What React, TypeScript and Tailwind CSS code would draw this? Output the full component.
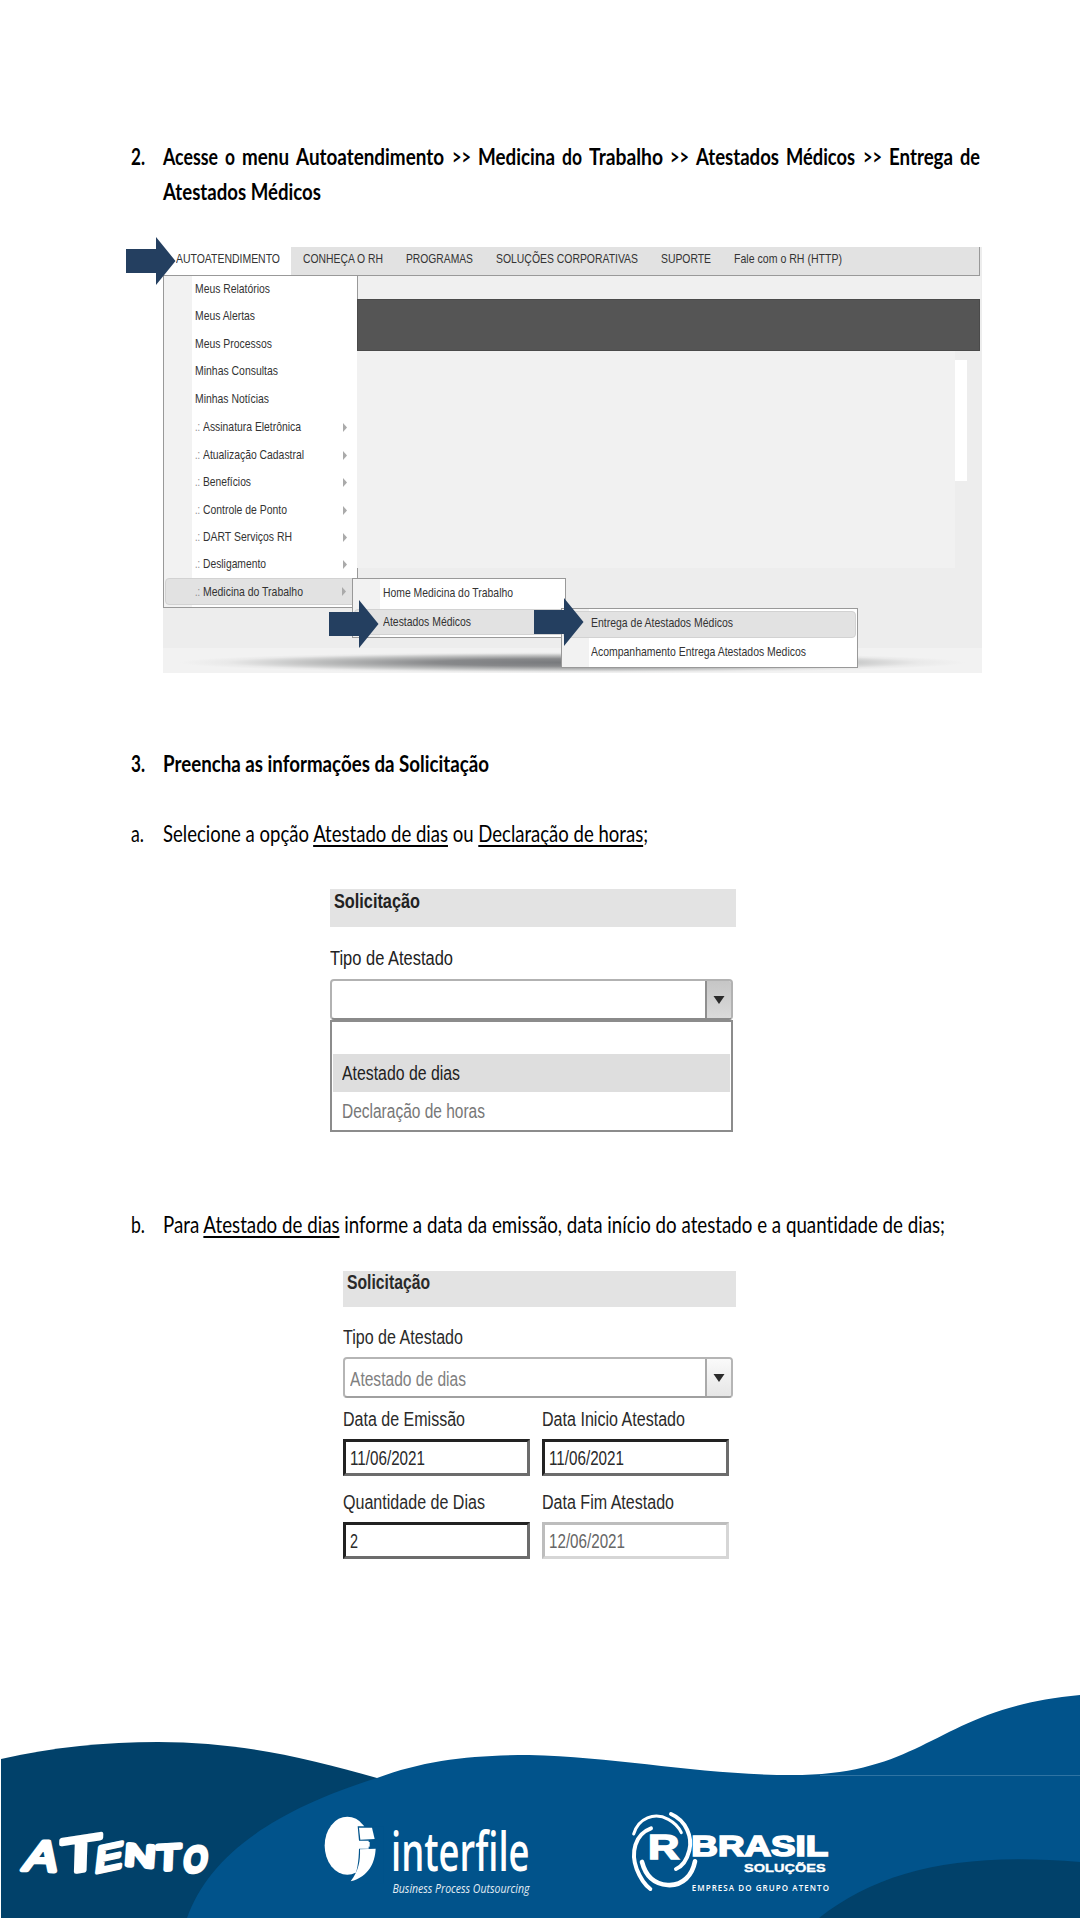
import { useLayoutEffect, useRef, type ReactNode } from "react";

/* Condenses or stretches a run of text horizontally to a given width. */
function Fit({ w, className = "", children }: { w: number; className?: string; children: ReactNode }) {
  const ref = useRef<HTMLSpanElement>(null);
  useLayoutEffect(() => {
    const el = ref.current;
    if (!el) return;
    el.style.transform = "none";
    const natural = el.getBoundingClientRect().width;
    if (natural > 0) el.style.transform = `scaleX(${w / natural})`;
  }, [w]);
  return (
    <span className={`block shrink-0 ${className}`} style={{ width: w }}>
      <span ref={ref} className="inline-block origin-left whitespace-nowrap align-top">
        {children}
      </span>
    </span>
  );
}

function Arrow({ className }: { className: string }) {
  return (
    <svg className={`absolute ${className}`} width="50" height="48" viewBox="0 0 50 48">
      <path d="M0 12H30V0L49.500 24L30 48V36H0Z" fill="#243f60" />
    </svg>
  );
}

const titleWords: [string, number][] = [
  ["Acesse", 55], ["o", 10], ["menu", 47], ["Autoatendimento", 148], [">>", 19], ["Medicina", 77],
  ["do", 20], ["Trabalho", 74], [">>", 19], ["Atestados", 83], ["Médicos", 69], [">>", 19],
  ["Entrega", 64], ["de", 20],
];

const tabs: [string, number][] = [
  ["CONHEÇA O RH", 80], ["PROGRAMAS", 67], ["SOLUÇÕES CORPORATIVAS", 142], ["SUPORTE", 50], ["Fale com o RH (HTTP)", 108],
];

const entries: [string, number][] = [
  ["Meus Relatórios", 75], ["Meus Alertas", 60], ["Meus Processos", 77], ["Minhas Consultas", 83], ["Minhas Notícias", 74],
];

const groups: [string, number][] = [
  ["Assinatura Eletrônica", 98], ["Atualização Cadastral", 101], ["Benefícios", 48], ["Controle de Ponto", 84],
  ["DART Serviços RH", 89], ["Desligamento", 63], ["Medicina do Trabalho", 100],
];

function PortalMenu() {
  return (
    <div className="relative ml-[163px] mt-[38px] h-[426px] w-[819px] shrink-0 bg-[#ededed] font-['Liberation_Sans',sans-serif] text-[13.500px] text-[#333]">
      <div className="flex h-[29px] w-[817px] border-b border-r border-[#999] bg-[#e2e2e2] leading-[24px]">
        <div className="w-[128px] bg-white pl-[13px]">
          <Fit w={104}>AUTOATENDIMENTO</Fit>
        </div>
        <div className="flex gap-[23px] pl-3">
          {tabs.map(([t, w]) => (
            <Fit key={t} w={w}>{t}</Fit>
          ))}
        </div>
      </div>
      <div className="flex h-[292px]">
        <div className="w-[194px] shrink-0" />
        <div className="flex w-[624px] flex-col">
          <div className="h-[23px] border-l border-[#999] bg-[#f0f0f0]" />
          <div className="h-[52px] w-[623px] border border-[#4a4a4a] bg-[#555]" />
          <div className="flex grow">
            <div className="w-[598px] bg-[#f1f1f1]" />
            <div className="mt-[9px] h-[121px] w-3 bg-white" />
          </div>
        </div>
      </div>
      <div className="mt-[80px] h-[25px] bg-[#f2f2f2] bg-[radial-gradient(ellipse_48%_42%_at_50%_58%,#77797c_0%,#88898b_35%,#bdbebe_65%,#e9e9e9_88%,#f2f2f2_100%)]" />

      <div className="absolute left-0 top-[29px] flex h-[332px] w-[194px] flex-col border-b border-l border-[#999] bg-[linear-gradient(to_right,#f2f2f2_28px,#fff_28px)]">
        {entries.map(([t, w]) => (
          <div key={t} className="h-[27.450px] pl-[31px] leading-[26px]">
            <Fit w={w}>{t}</Fit>
          </div>
        ))}
        {groups.map(([t, w], i) => (
          <div
            key={t}
            className={
              i === 6
                ? "ml-px flex h-[27.450px] items-start rounded-sm border border-[#d2d2d2] bg-[#e2e2e2] pl-[29px] leading-[25px]"
                : "flex h-[27.450px] items-start pl-[31px] leading-[27px]"
            }
          >
            <Fit w={5} className="text-[#888]">.:</Fit>
            <Fit w={w} className="ml-[3px]">{t}</Fit>
            <svg className={i === 6 ? "ml-auto mr-[10px] mt-[8px] h-[9px] w-[4px]" : "ml-auto mr-[10px] mt-[10px] h-[9px] w-[4px]"} viewBox="0 0 4 9">
              <path d="M0 0L4 4.500L0 9Z" fill="#aaa" />
            </svg>
          </div>
        ))}
      </div>
      <div className="absolute left-[194px] top-[321px] h-[10px] w-px bg-[#999]" />

      <div className="absolute left-[189px] top-[331px] flex h-[60px] w-[214px] flex-col border border-[#999] bg-[linear-gradient(to_right,#f2f2f2_27px,#fff_27px)]">
        <div className="h-[30px] pl-[30px] leading-[27px]">
          <Fit w={130}>Home Medicina do Trabalho</Fit>
        </div>
        <div className="mx-px h-[26px] rounded-sm border border-[#d2d2d2] bg-[#e2e2e2] pl-[28px] leading-[24px]">
          <Fit w={88}>Atestados Médicos</Fit>
        </div>
      </div>
      <div className="absolute left-[398px] top-[361px] flex h-[60px] w-[297px] flex-col border border-[#999] bg-[linear-gradient(to_right,#f2f2f2_27px,#fff_27px)] pt-[2px]">
        <div className="mx-px h-[27px] rounded-sm border border-[#d2d2d2] bg-[#e2e2e2] pl-[27px] leading-[22px]">
          <Fit w={142}>Entrega de Atestados Médicos</Fit>
        </div>
        <div className="pl-[29px] leading-[27px]">
          <Fit w={215}>Acompanhamento Entrega Atestados Medicos</Fit>
        </div>
      </div>
      <Arrow className="left-[-37px] top-[-10px]" />
      <Arrow className="left-[166px] top-[353px]" />
      <Arrow className="left-[371px] top-[351px]" />
    </div>
  );
}

function Caret() {
  return (
    <svg className="h-[8px] w-[12px]" viewBox="0 0 12 8">
      <path d="M0.500 0H11.500L6 8Z" fill="#2b2b2b" />
    </svg>
  );
}

function DropdownForm() {
  return (
    <div className="ml-[330px] mt-[38px] h-[243px] w-[406px] shrink-0 font-['Liberation_Sans',sans-serif] text-[20px] text-[#222]">
      <div className="h-[38px] bg-[#e3e3e3] pl-[4px] font-bold leading-[25px]">
        <Fit w={86}>Solicitação</Fit>
      </div>
      <div className="mt-[17px] h-[35px] leading-[28px]">
        <Fit w={123}>Tipo de Atestado</Fit>
      </div>
      <div className="flex h-[41px] w-[403px] overflow-hidden rounded-[4px] border-2 border-[#b2b2b2] border-b-[#8a8a8a] bg-white">
        <div className="grow" />
        <div className="flex w-[26px] items-center justify-center border-l-2 border-[#8f8f8f] bg-linear-to-b from-[#c6c6c6] to-[#dadada]">
          <Caret />
        </div>
      </div>
      <div className="flex h-[112px] w-[403px] flex-col border-2 border-[#8c8c8c] bg-white px-px">
        <div className="h-[32px] shrink-0" />
        <div className="h-[38px] shrink-0 bg-[#dedede] pl-[9px] leading-[38px]">
          <Fit w={118}>Atestado de dias</Fit>
        </div>
        <div className="h-[38px] shrink-0 pl-[9px] leading-[38px] text-[#777]">
          <Fit w={143}>Declaração de horas</Fit>
        </div>
      </div>
    </div>
  );
}

function Field({ label, lw, value, vw, disabled }: { label: string; lw: number; value: string; vw: number; disabled?: boolean }) {
  return (
    <div className="w-[187px]">
      <div className="h-[33px] leading-[27px]">
        <Fit w={lw}>{label}</Fit>
      </div>
      <div
        className={
          "h-[37px] border-[3px] bg-white pl-[4px] leading-[32px] " +
          (disabled
            ? "border-b-[#d6d6d6] border-l-[#bdbdbd] border-r-[#d6d6d6] border-t-[#bdbdbd] text-[#666]"
            : "border-b-[#6c6c6c] border-l-[#222] border-r-[#6c6c6c] border-t-[#222]")
        }
      >
        <Fit w={vw}>{value}</Fit>
      </div>
    </div>
  );
}

function DatesForm() {
  return (
    <div className="ml-[343px] mt-[29px] h-[289px] w-[393px] shrink-0 font-['Liberation_Sans',sans-serif] text-[20px] text-[#2a2a2a]">
      <div className="h-[36px] bg-[#e3e3e3] pl-[4px] font-bold leading-[22px]">
        <Fit w={83}>Solicitação</Fit>
      </div>
      <div className="mt-[16px] h-[34px] leading-[28px]">
        <Fit w={120}>Tipo de Atestado</Fit>
      </div>
      <div className="flex h-[41px] w-[390px] overflow-hidden rounded-[4px] border-2 border-[#b5b5b5] border-b-[#a0a0a0] bg-white">
        <div className="grow pl-[5px] leading-[40px] text-[#808080]">
          <Fit w={116}>Atestado de dias</Fit>
        </div>
        <div className="flex w-[26px] items-center justify-center border-l-2 border-[#aaa] bg-linear-to-b from-[#fafafa] to-[#e6e6e6]">
          <Caret />
        </div>
      </div>
      <div className="mt-[8px] grid grid-cols-[187px_187px] gap-x-[12px] gap-y-[13px]">
        <Field label="Data de Emissão" lw={122} value="11/06/2021" vw={75} />
        <Field label="Data Inicio Atestado" lw={143} value="11/06/2021" vw={75} />
        <Field label="Quantidade de Dias" lw={142} value="2" vw={8} />
        <Field label="Data Fim Atestado" lw={132} value="12/06/2021" vw={76} disabled />
      </div>
    </div>
  );
}

function Letter({ c, t, size }: { c: string; t: string; size: number }) {
  return (
    <text transform={t} fontSize={size}>{c}</text>
  );
}

function Footer() {
  return (
    <svg className="mt-auto block shrink-0" width="1080" height="240" viewBox="0 0 1080 240">
      <path d="M1 79C55 67 105 62 158 62C235 62 300 76 377 98V238H1Z" fill="#01416a" />
      <path d="M187 238C208 180 265 133 377 98C425 80 473 75 529 75C620 77 700 95 792 95C930 95 935 28 1080 15V238Z" fill="#01538b" />
      <path d="M819 238C880 190 960 172 1080 182V238Z" fill="#01416a" />
      <path d="M820 95.500H1080" stroke="#2f73a2" strokeWidth="1" />

      {/* Atento */}
      <g fill="#fff" stroke="#fff" strokeWidth="5" strokeLinejoin="round" fontFamily="'Liberation Sans', sans-serif">
        <Letter c="A" t="matrix(1 .04 -.22 .86 22 190)" size={49} />
        <Letter c="T" t="matrix(1.3 -.2 -.03 .96 60 194)" size={51} />
        <Letter c="E" t="matrix(.95 -.2 -.1 .86 94 193)" size={43} />
        <Letter c="N" t="matrix(1.18 .1 -.06 .85 124 185)" size={36} />
        <Letter c="T" t="matrix(1.12 -.06 -.04 1 156 190)" size={35} />
        <Letter c="O" t="matrix(.92 -.06 -.12 1.08 183 192)" size={32} />
      </g>

      {/* Interfile */}
      <g transform="translate(310 120) scale(.33333)">
        <ellipse cx="112" cy="137" rx="68" ry="87" fill="#fff" />
        <path d="M143 79H220V250H126C143 215 146 183 147 146H176V122H147Z" fill="#01538b" />
        <path d="M147 83H186L194 117L151 119Z" fill="#fff" />
        <path d="M158 126H179V140H158Z" fill="#fff" />
        <path d="M150 148L197 146C195 188 177 229 122 244C147 211 151 182 150 148Z" fill="#fff" />
      </g>
      <g fontFamily="'Open Sans', sans-serif">
        <text x="391" y="191" fontWeight="600" fontSize="54" textLength="138.500" lengthAdjust="spacingAndGlyphs" fill="#fff">
          interfile
        </text>
        <text x="392.500" y="213" fontStyle="italic" fontSize="13" textLength="137" lengthAdjust="spacingAndGlyphs" fill="#e4edf4">
          Business Process Outsourcing
        </text>
      </g>

      {/* RBrasil */}
      <g transform="translate(620 120) scale(.33333)">
        <g fill="none" stroke="#fff" strokeLinecap="round">
          <path d="M41 102C55 55 103 35 145 58C167 70 179 87 184 98" strokeWidth="9" />
          <path d="M153 42C199 62 218 112 208 151C201 179 188 199 168 207" strokeWidth="12" />
          <path d="M93 85C44 103 32 158 50 207C62 238 74 254 91 267" strokeWidth="12" />
          <path d="M66 186C76 225 101 252 143 255C190 258 217 224 225 184" strokeWidth="14" />
        </g>
        <g fill="#fff" fontFamily="'Liberation Sans', sans-serif" fontWeight="700">
          <text x="84" y="178" fontSize="108" stroke="#fff" strokeWidth="5" textLength="94" lengthAdjust="spacingAndGlyphs">R</text>
          <text x="214" y="167" fontSize="88" stroke="#fff" strokeWidth="5" textLength="411" lengthAdjust="spacingAndGlyphs">BRASIL</text>
          <text x="372" y="217" fontSize="35" stroke="#fff" strokeWidth="1" textLength="245" lengthAdjust="spacingAndGlyphs">SOLUÇÕES</text>
        </g>
        <text x="215" y="272" fill="#fff" fontFamily="'Open Sans', sans-serif" fontWeight="600" fontSize="24" textLength="412">
          EMPRESA DO GRUPO ATENTO
        </text>
      </g>
    </svg>
  );
}

const underlined = "underline decoration-2 underline-offset-[3px] [text-decoration-skip-ink:none]";

export default function App() {
  return (
    <main className="flex h-[1920px] w-[1080px] flex-col overflow-hidden bg-white font-[Lato,sans-serif] text-[23px] leading-[35px] text-black [font-variant-ligatures:none]">
      <div className="mt-[139px] flex shrink-0 pl-[131px] font-bold">
        <Fit w={14}>2.</Fit>
        <div className="ml-[18px] w-[817px]">
          <div className="flex justify-between">
            {titleWords.map(([t, w], i) => (
              <Fit key={i} w={w}>{t}</Fit>
            ))}
          </div>
          <Fit w={158}>Atestados Médicos</Fit>
        </div>
      </div>
      <PortalMenu />
      <div className="mt-[73px] flex shrink-0 pl-[131px] font-bold">
        <Fit w={14}>3.</Fit>
        <Fit w={326} className="ml-[18px]">Preencha as informações da Solicitação</Fit>
      </div>
      <div className="mt-[35px] flex shrink-0 pl-[131px]">
        <Fit w={13}>a.</Fit>
        <Fit w={485} className="ml-[19px]">
          Selecione a opção <span className={underlined}>Atestado de dias</span> ou{" "}
          <span className={underlined}>Declaração de horas</span>;
        </Fit>
      </div>
      <DropdownForm />
      <div className="mt-[75px] flex shrink-0 pl-[131px]">
        <Fit w={14}>b.</Fit>
        <Fit w={782} className="ml-[18px]">
          Para <span className={underlined}>Atestado de dias</span> informe a data da
          emissão, data início do atestado e a quantidade de dias;
        </Fit>
      </div>
      <DatesForm />
      <Footer />
    </main>
  );
}
